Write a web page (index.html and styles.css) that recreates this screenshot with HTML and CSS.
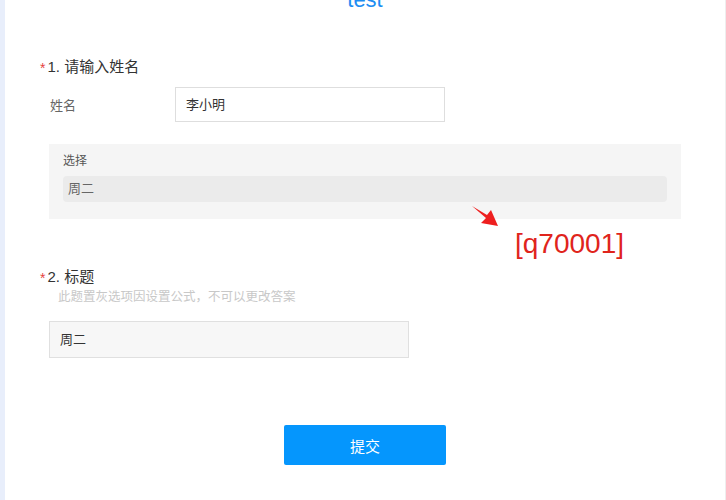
FILE: index.html
```html
<!DOCTYPE html>
<html lang="zh">
<head>
<meta charset="utf-8">
<link rel="stylesheet" href="styles.css">
</head>
<body>
<div class="page">
  <div class="side"></div>
  <div class="main">
    <div class="title">test</div>

    <div class="question q1">
      <div class="q-title"><span class="star">*</span>1. 请输入姓名</div>
      <div class="row">
        <div class="label">姓名</div>
        <div class="input">李小明</div>
      </div>
      <div class="group">
        <div class="group-label">选择</div>
        <div class="select">周二</div>
      </div>
    </div>

    <div class="question q2">
      <div class="q-title"><span class="star">*</span>2. 标题</div>
      <div class="hint">此题置灰选项因设置公式，不可以更改答案</div>
      <div class="disabled-box">周二</div>
    </div>

    <div class="actions">
      <button class="submit">提交</button>
    </div>

    <svg class="arrow" width="34" height="24" viewBox="0 0 34 24">
      <polygon points="6,2 21,11 25,6 32,22 15,19 20,14" fill="#ee1f1f"/>
    </svg>
    <div class="tag">[q70001]</div>
  </div>
  <div class="edge"></div>
</div>
</body>
</html>
```

FILE: styles.css
```css
html, body {
  margin: 0;
  padding: 0;
  background: #ffffff;
  height: 100%;
  overflow: hidden;
}
body {
  font-family: "Liberation Sans", "Noto Sans CJK SC", sans-serif;
  color: #333;
}
.page {
  display: flex;
  height: 500px;
}
.side {
  width: 5px;
  flex: none;
  background: #e8eefb;
}
.edge {
  width: 1px;
  flex: none;
  background: #eeeeee;
}
.main {
  position: relative;
  flex: 1;
  padding-left: 35px;
  background: #fff;
}
.title {
  margin-top: -12px;
  height: 24px;
  line-height: 24px;
  font-size: 22px;
  text-align: center;
  color: #1e8df2;
  padding-right: 35px;
}
.question {
  display: flex;
  flex-direction: column;
}
.q1 {
  margin-top: 45px;
}
.q-title {
  font-size: 15px;
  line-height: 20px;
  color: #333;
}
.star {
  color: #e64340;
  font-size: 14px;
  margin-right: 2px;
  position: relative;
  top: 1px;
}
.row {
  display: flex;
  align-items: center;
  margin-top: 10px;
  padding-left: 10px;
}
.label {
  width: 125px;
  font-size: 13px;
  color: #666;
}
.input {
  width: 258px;
  height: 33px;
  line-height: 33px;
  border: 1px solid #dedede;
  padding-left: 10px;
  font-size: 13px;
  color: #333;
}
.group {
  margin-top: 22px;
  margin-left: 9px;
  width: 604px;
  padding: 8px 14px 17px 14px;
  background: #f5f5f5;
}
.group-label {
  font-size: 12px;
  line-height: 18px;
  color: #555;
}
.select {
  margin-top: 6px;
  height: 26px;
  line-height: 26px;
  border-radius: 4px;
  background: #ebebeb;
  padding-left: 5px;
  font-size: 13px;
  color: #666;
}
.q2 {
  margin-top: 48px;
}
.hint {
  margin-top: 1px;
  padding-left: 18px;
  font-size: 12.5px;
  line-height: 18px;
  color: #c8c8c8;
}
.disabled-box {
  margin-top: 15px;
  margin-left: 9px;
  width: 348px;
  height: 35px;
  line-height: 35px;
  padding-left: 10px;
  background: #f7f7f7;
  border: 1px solid #e0e0e0;
  font-size: 13px;
  color: #333;
}
.actions {
  display: flex;
  justify-content: center;
  margin-top: 67px;
  padding-right: 35px;
}
.submit {
  width: 162px;
  height: 40px;
  border: none;
  border-radius: 2px;
  background: #0596fd;
  color: #fff;
  font-family: "Liberation Sans", "Noto Sans CJK SC", sans-serif;
  font-size: 15px;
  padding: 0;
}
.arrow {
  position: absolute;
  left: 461px;
  top: 204px;
}
.tag {
  position: absolute;
  left: 510px;
  top: 228px;
  font-size: 28px;
  line-height: 32px;
  color: #e0241c;
  font-family: "Liberation Sans", sans-serif;
}
```
